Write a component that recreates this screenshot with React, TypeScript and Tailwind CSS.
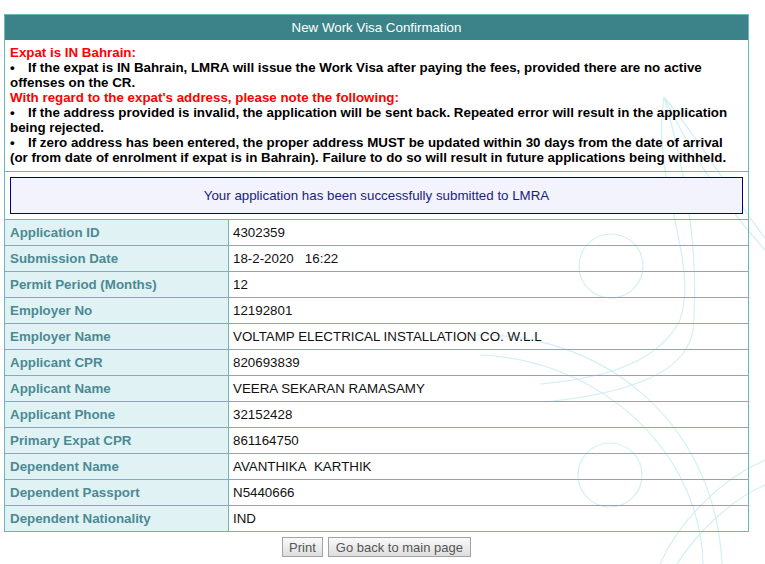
import { FC } from "react";

const rows: [string, string][] = [
  ["Application ID", "4302359"],
  ["Submission Date", "18-2-2020\u00a0\u00a0\u00a016:22"],
  ["Permit Period (Months)", "12"],
  ["Employer No", "12192801"],
  ["Employer Name", "VOLTAMP ELECTRICAL INSTALLATION CO. W.L.L"],
  ["Applicant CPR", "820693839"],
  ["Applicant Name", "VEERA SEKARAN RAMASAMY"],
  ["Applicant Phone", "32152428"],
  ["Primary Expat CPR", "861164750"],
  ["Dependent Name", "AVANTHIKA\u00a0\u00a0KARTHIK"],
  ["Dependent Passport", "N5440666"],
  ["Dependent Nationality", "IND"],
];

// faint watermark behind the form
const Watermark: FC = () => (
  <svg
    className="pointer-events-none absolute left-0 top-0"
    width="765"
    height="564"
    viewBox="0 0 765 564"
    fill="none"
    stroke="#d3eff3"
    strokeWidth="1.2"
  >
    <circle cx="611" cy="266" r="32" />
    <circle cx="610" cy="475" r="32" />
    <path d="M664 97 C650 180 700 260 680 320 C660 360 610 378 540 384" />
    <path d="M664 97 C690 150 720 200 765 250" />
    <path d="M664 97 C700 140 735 200 765 238" />
    <path d="M664 97 C685 170 700 250 693 330 C688 360 660 390 545 402" />
    <path d="M470 335 C600 330 715 420 722 564" />
    <path d="M480 355 C600 360 700 450 703 564" />
    <path d="M765 460 C720 480 680 520 660 564" />
    <path d="M765 485 C730 500 695 535 677 564" />
  </svg>
);

const Bullet: FC = () => <span className="inline-block w-[18px]">•</span>;

export default function App() {
  return (
    <div className="relative h-[564px] w-[765px] overflow-hidden bg-white font-['Liberation_Sans',Arial,sans-serif]">
      <Watermark />
      <div className="relative ml-[4px] pt-[14px]">
        <div className="w-[745px] border border-[#6cb6bc]">
          <div className="flex h-[25px] items-center justify-center bg-[#3b8389] text-[13.33px] text-white">
            New Work Visa Confirmation
          </div>

          <div className="px-[5px] pb-[6px] pt-[5px] text-[13.33px] font-bold leading-[15px] text-black">
            <div className="text-[#ff0000]">Expat is IN Bahrain:</div>
            <div>
              <Bullet />
              If the expat is IN Bahrain, LMRA will issue the Work Visa after paying the fees, provided there are no active offenses on the CR.
            </div>
            <div className="text-[#ff0000]">With regard to the expat's address, please note the following:</div>
            <div>
              <Bullet />
              If the address provided is invalid, the application will be sent back. Repeated error will result in the application being rejected.
            </div>
            <div>
              <Bullet />
              If zero address has been entered, the proper address MUST be updated within 30 days from the date of arrival (or from date of enrolment if expat is in Bahrain). Failure to do so will result in future applications being withheld.
            </div>
          </div>

          <div className="border-t border-[#6cb6bc] px-[5px] py-[5px]">
            <div className="flex h-[37px] items-center justify-center border border-[#000080] bg-[#f2f3fc] text-[13.33px] text-[#1c1c7c]">
              Your application has been successfully submitted to LMRA
            </div>
          </div>

          {rows.map(([label, value]) => (
            <div key={label} className="grid h-[26px] grid-cols-[224px_1fr] border-t border-[#6cb6bc]">
              <div className="flex items-center border-r border-[#6cb6bc] bg-[#e1f2f5] pl-[5px] text-[13.33px] font-bold text-[#4b8a93]">
                {label}
              </div>
              <div className="flex items-center pl-[4px] text-[13.33px] text-[#111]">{value}</div>
            </div>
          ))}
        </div>

        <div className="mt-[5px] flex w-[745px] justify-center gap-[5px]">
          <button className="h-[20px] border border-[#a3a3a3] bg-gradient-to-b from-[#fafafa] to-[#dedede] px-[6px] text-[13px] leading-none text-[#555]">
            Print
          </button>
          <button className="h-[20px] border border-[#a3a3a3] bg-gradient-to-b from-[#fafafa] to-[#dedede] px-[7px] text-[13px] leading-none text-[#555]">
            Go back to main page
          </button>
        </div>
      </div>
    </div>
  );
}
